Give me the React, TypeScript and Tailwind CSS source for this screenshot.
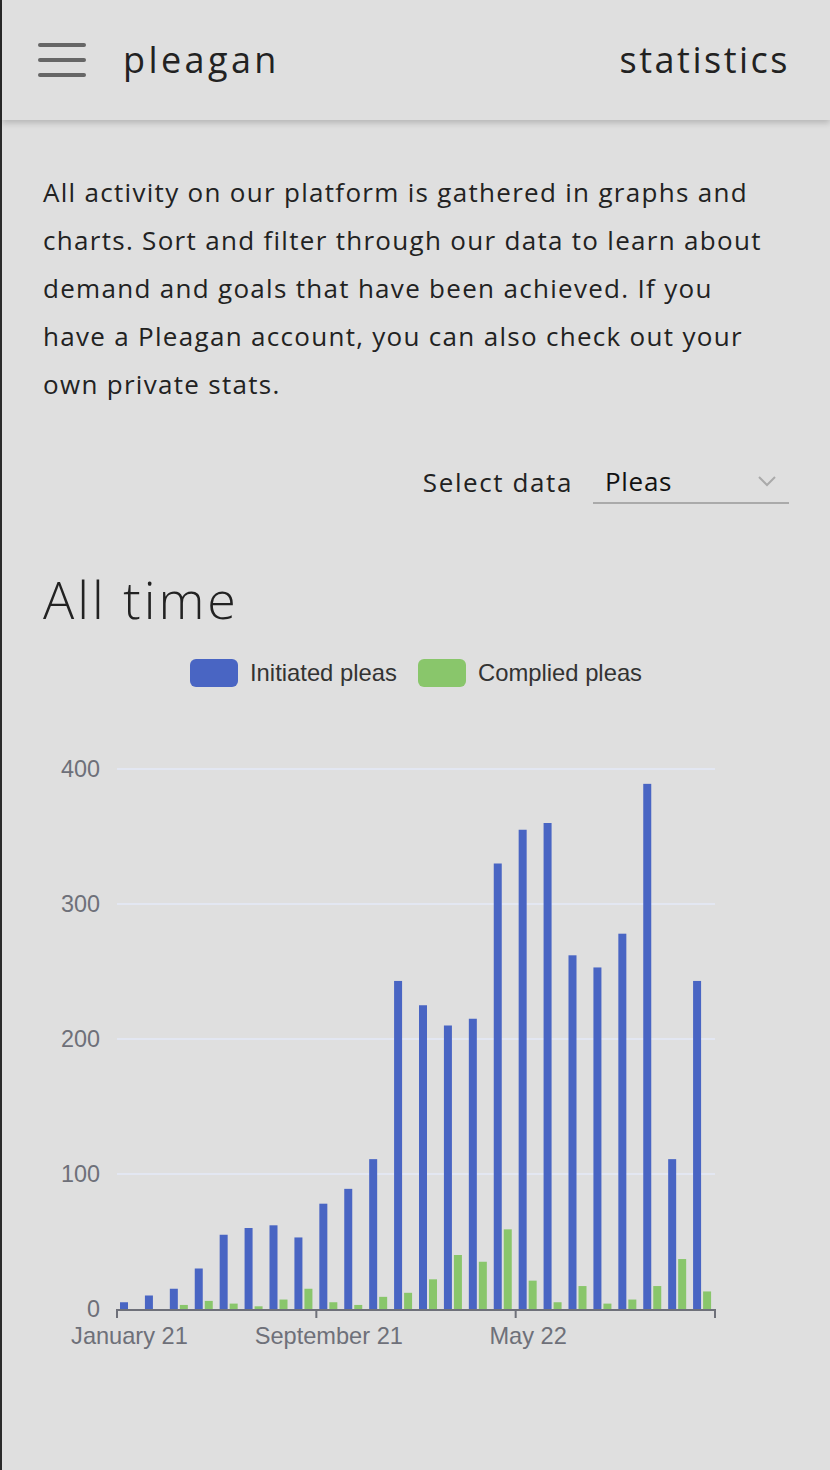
import React from 'react'

const blue = [5, 10, 15, 30, 55, 60, 62, 53, 78, 89, 111, 243, 225, 210, 215, 330, 355, 360, 262, 253, 278, 389, 111, 243]
const green = [0, 0, 3, 6, 4, 2, 7, 15, 5, 3, 9, 12, 22, 40, 35, 59, 21, 5, 17, 4, 7, 17, 37, 13]

// chart svg top sits at page y=640
const TOP = 640
const BASE = 1308 - TOP
const SCALE = 1.35
const X0 = 117
const X1 = 715
const STEP = (X1 - X0) / 24

function Chart() {
  const font = { fontFamily: '"Liberation Sans", Arial, sans-serif' }
  return (
    <svg width={830} height={740} viewBox="0 0 830 740" className="block" style={font}>
      {/* legend */}
      <rect x={190} y={18} width={48} height={28} rx={6} fill="#4965c3" />
      <text x={250} y={40} fontSize={23.8} fill="#333">Initiated pleas</text>
      <rect x={418} y={18} width={48} height={28} rx={6} fill="#89c66b" />
      <text x={478} y={40} fontSize={23.8} fill="#333">Complied pleas</text>

      {/* grid */}
      {[100, 200, 300, 400].map((v) => (
        <line key={v} x1={X0} x2={X1} y1={BASE - v * SCALE} y2={BASE - v * SCALE} stroke="#e3e7f2" strokeWidth={2} />
      ))}
      {[0, 100, 200, 300, 400].map((v) => (
        <text key={v} x={100} y={BASE - v * SCALE + 8} fontSize={23.4} fill="#6e7079" textAnchor="end">
          {v}
        </text>
      ))}

      {/* bars */}
      {blue.map((v, i) => {
        const x = X0 + i * STEP
        const g = green[i]
        return (
          <g key={i}>
            <rect x={x + 3} y={BASE - v * SCALE} width={8} height={v * SCALE} fill="#4965c3" />
            {g > 0 && <rect x={x + 13} y={BASE - g * SCALE} width={8} height={g * SCALE} fill="#89c66b" />}
          </g>
        )
      })}

      {/* x axis */}
      <line x1={X0} x2={X1} y1={BASE + 1} y2={BASE + 1} stroke="#6e7079" strokeWidth={2} />
      {[0, 8, 16, 24].map((i) => (
        <line key={i} x1={X0 + i * STEP} x2={X0 + i * STEP} y1={BASE} y2={BASE + 9} stroke="#6e7079" strokeWidth={2} />
      ))}
      {[
        ['January 21', 0],
        ['September 21', 8],
        ['May 22', 16],
      ].map(([label, i]) => (
        <text
          key={label as string}
          x={X0 + (i as number) * STEP + STEP / 2}
          y={BASE + 35}
          fontSize={23.6}
          fill="#6e7079"
          textAnchor="middle"
        >
          {label}
        </text>
      ))}
    </svg>
  )
}

export default function App() {
  return (
    <div
      className="min-h-[1470px] w-[830px] bg-[#dfdfdf] border-l-2 border-[#2a2a2a] text-[#222]"
      style={{ fontFamily: '"Open Sans", "Noto Sans", sans-serif' }}
    >
      <header className="h-[120px] flex items-center justify-between pl-[36px] pr-[40px] shadow-[0_3px_6px_rgba(0,0,0,0.18)] relative">
        <div className="flex items-center gap-[37px]">
          <div className="flex flex-col gap-[11px] w-[48px]">
            <span className="block h-[4px] rounded-full bg-[#666]" />
            <span className="block h-[4px] rounded-full bg-[#666]" />
            <span className="block h-[4px] rounded-full bg-[#666]" />
          </div>
          <span className="text-[36px] tracking-[3.4px]">pleagan</span>
        </div>
        <span className="text-[36px] tracking-[2.5px]">statistics</span>
      </header>

      <main className="pt-[48px]">
        <div className="px-[41px]">
          <p className="text-[26px] leading-[48px] tracking-[1.3px] pr-[22px]">
            All activity on our platform is gathered in graphs and charts. Sort and filter through our data to learn
            about demand and goals that have been achieved. If you have a Pleagan account, you can also check out your
            own private stats.
          </p>

          <div className="flex justify-end items-center gap-[20px] mt-[52px]">
            <span className="text-[26px] tracking-[1.6px]">Select data</span>
            <div className="w-[196px] h-[44px] border-b-2 border-[#aaa] flex items-center justify-between pl-[12px] pr-[12px]">
              <span className="text-[26px] tracking-[0.7px] text-[#111]">Pleas</span>
              <svg width={20} height={12} viewBox="0 0 20 12" fill="none">
                <path d="M2 2l8 8 8-8" stroke="#aaa" strokeWidth={2} />
              </svg>
            </div>
          </div>

          <h1 className="text-[52px] font-light leading-none tracking-[3px] mt-[69px]">All time</h1>
        </div>
        <div className="-ml-[2px] mt-[16px]">
          <Chart />
        </div>
      </main>
    </div>
  )
}
